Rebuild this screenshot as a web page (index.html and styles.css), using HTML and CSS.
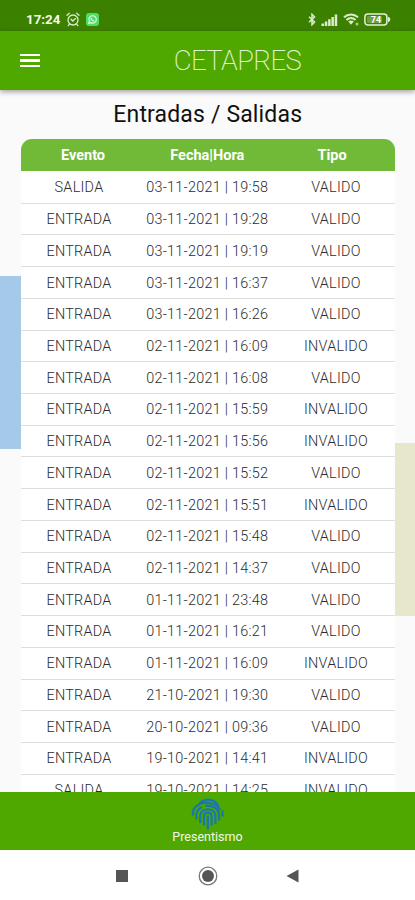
FILE: index.html
```html
<!DOCTYPE html>
<html lang="es">

<head>
    <meta charset="UTF-8">
    <meta name="viewport" content="width=device-width, initial-scale=1.0">
    <title>CETAPRES</title>
    <link rel="stylesheet" href="styles.css">
</head>

<body>
    <div class="statusBar">
        <div class="statusLeft">
            <span class="clock">17:24</span>
            <svg class="alarmIcon" width="14" height="15" viewBox="0 0 14 15" fill="none" stroke="#dcebcd" stroke-width="1.3" stroke-linecap="round">
                <circle cx="7" cy="8" r="5" />
                <path d="M1 3.2L3.3 1.2M13 3.2L10.7 1.2M3.4 12.2L2.2 13.6M10.6 12.2L11.8 13.6M5 7.2L6.8 9L9.4 6.6" />
            </svg>
            <svg width="13" height="13" viewBox="0 0 13 13">
                <rect width="13" height="13" rx="3" fill="#4ade66" />
                <path d="M2.7 10.4L3.4 8.2A3.7 3.7 0 1 1 4.9 9.7Z" fill="none" stroke="#e6ffe8" stroke-width="1.1" />
                <path d="M5.2 4.7C5 6.6 6.4 8 8.3 8" fill="none" stroke="#e6ffe8" stroke-width="1.2" />
            </svg>
        </div>
        <div class="statusRight">
            <svg width="8" height="13" viewBox="0 0 8 13" fill="none" stroke="#dcebcd" stroke-width="1.5">
                <path d="M1 3.7L6.6 9L4 11.7V1.3L6.6 4L1 9.3" />
            </svg>
            <svg class="signalIcon" width="17" height="12" viewBox="0 0 17 12" fill="#dcebcd">
                <path d="M0.5 9.5h2.5V12H0.5zM3.8 7.5h2.5V12H3.8zM7.1 5.3h2.5V12H7.1zM10.4 3h2.5v9h-2.5zM13.7 0.5h2.5V12h-2.5z" />
            </svg>
            <svg class="wifiIcon" width="17" height="13" viewBox="0 0 17 13" fill="none" stroke="#dcebcd" stroke-width="2">
                <path d="M1 4.3C5.2 0.5 10.8 0.5 15 4.3M3.4 7C6.3 4.5 9.7 4.5 12.6 7" />
                <path d="M5.2 8.6C7 7.2 9 7.2 10.8 8.6L8 11.8Z" fill="#dcebcd" stroke="none" />
                <circle cx="14" cy="11" r="1.5" fill="#a9cb85" stroke="none" />
            </svg>
            <svg class="batteryIcon" width="27" height="13" viewBox="0 0 27 13">
                <rect x="0.9" y="1" width="22" height="11" rx="3" fill="none" stroke="#e4f0d8" stroke-width="1.5" />
                <rect x="3" y="3" width="15" height="7" rx="1" fill="#6fa040" />
                <path d="M24 3.8C27 4.6 27 8.4 24 9.2Z" fill="#e4f0d8" />
                <text x="12" y="9.8" text-anchor="middle">74</text>
            </svg>
        </div>
    </div>

    <header class="appBar">
        <div class="menuButton">
            <span></span>
            <span></span>
            <span></span>
        </div>
        <h1>CETAPRES</h1>
    </header>

    <main class="content">
        <h2>Entradas / Salidas</h2>
        <table class="events">
            <thead>
                <tr><th>Evento</th><th>Fecha|Hora</th><th>Tipo</th></tr>
            </thead>
            <tbody>
                <tr><td>SALIDA</td><td>03-11-2021 | 19:58</td><td>VALIDO</td></tr>
                <tr><td>ENTRADA</td><td>03-11-2021 | 19:28</td><td>VALIDO</td></tr>
                <tr><td>ENTRADA</td><td>03-11-2021 | 19:19</td><td>VALIDO</td></tr>
                <tr><td>ENTRADA</td><td>03-11-2021 | 16:37</td><td>VALIDO</td></tr>
                <tr><td>ENTRADA</td><td>03-11-2021 | 16:26</td><td>VALIDO</td></tr>
                <tr><td>ENTRADA</td><td>02-11-2021 | 16:09</td><td>INVALIDO</td></tr>
                <tr><td>ENTRADA</td><td>02-11-2021 | 16:08</td><td>VALIDO</td></tr>
                <tr><td>ENTRADA</td><td>02-11-2021 | 15:59</td><td>INVALIDO</td></tr>
                <tr><td>ENTRADA</td><td>02-11-2021 | 15:56</td><td>INVALIDO</td></tr>
                <tr><td>ENTRADA</td><td>02-11-2021 | 15:52</td><td>VALIDO</td></tr>
                <tr><td>ENTRADA</td><td>02-11-2021 | 15:51</td><td>INVALIDO</td></tr>
                <tr><td>ENTRADA</td><td>02-11-2021 | 15:48</td><td>VALIDO</td></tr>
                <tr><td>ENTRADA</td><td>02-11-2021 | 14:37</td><td>VALIDO</td></tr>
                <tr><td>ENTRADA</td><td>01-11-2021 | 23:48</td><td>VALIDO</td></tr>
                <tr><td>ENTRADA</td><td>01-11-2021 | 16:21</td><td>VALIDO</td></tr>
                <tr><td>ENTRADA</td><td>01-11-2021 | 16:09</td><td>INVALIDO</td></tr>
                <tr><td>ENTRADA</td><td>21-10-2021 | 19:30</td><td>VALIDO</td></tr>
                <tr><td>ENTRADA</td><td>20-10-2021 | 09:36</td><td>VALIDO</td></tr>
                <tr><td>ENTRADA</td><td>19-10-2021 | 14:41</td><td>INVALIDO</td></tr>
                <tr><td>SALIDA</td><td>19-10-2021 | 14:25</td><td>INVALIDO</td></tr>
            </tbody>
        </table>
    </main>

    <footer class="tabBar">
        <svg width="34" height="32" viewBox="0 0 34 32" fill="none" stroke="#1777ae" stroke-width="2.2">
            <path d="M7.5 7.2C12.5 -0.2 22.5 -0.4 27.6 8.2" />
            <path d="M2 17.5C1.4 13.5 2.6 10.6 5.2 8.4C13 2 25.4 4.5 29.3 12.2" />
            <path d="M31.5 12.5V18.5" />
            <path d="M5.4 21.5V16.5C5.8 12.6 8.4 10.2 11 9M14 7.8C21.6 6.4 28 11 28 17.5V22.5" />
            <path d="M9.2 25V17.5C9.6 9.3 24 9.2 24.4 17.5V26" />
            <path d="M13 27.5V18C13.2 13.6 20.4 13.6 20.6 18V27.5" />
            <path d="M16.8 17.5V31.5" />
        </svg>
        <span>Presentismo</span>
    </footer>

    <nav class="systemNav">
        <svg width="14" height="14" viewBox="0 0 14 14">
            <rect x="1" y="1" width="12" height="12" fill="#555" />
        </svg>
        <svg width="20" height="20" viewBox="0 0 20 20">
            <circle cx="10" cy="10" r="8.8" fill="none" stroke="#777" stroke-width="1.3" />
            <circle cx="10" cy="10" r="6" fill="#555" />
        </svg>
        <svg width="14" height="14" viewBox="0 0 14 14">
            <path d="M0.5 7L12.5 0.5V13.5Z" fill="#555" />
        </svg>
    </nav>
</body>

</html>
```

FILE: styles.css
```css
body {
    margin: 0;
    height: 900px;
    display: flex;
    flex-direction: column;
    overflow: hidden;
    background-color: #fafafa;
    font-family: Roboto, sans-serif;
}

/* Android status bar */

.statusBar {
    height: 31px;
    flex: none;
    box-sizing: border-box;
    padding: 8px 24px 0 26px;
    display: flex;
    justify-content: space-between;
    background-color: #3c8000;
}

.statusLeft,
.statusRight {
    display: flex;
    align-items: center;
    height: 23px;
}

.clock {
    width: 34px;
    font-size: 13.3px;
    font-weight: 700;
    color: #f2f8ec;
}

.alarmIcon {
    margin: 0 6px;
}

.signalIcon {
    margin: 0 5px;
}

.wifiIcon {
    margin-right: 4px;
}

.batteryIcon text {
    font-size: 9px;
    font-weight: 700;
    fill: #fff;
}

.appBar {
    height: 59px;
    flex: none;
    display: flex;
    align-items: center;
    background-color: #4fa800;
    box-shadow: 0 2px 5px rgba(0, 0, 0, 0.35);
}

.menuButton {
    width: 20px;
    margin-left: 20px;
    display: flex;
    flex-direction: column;
    gap: 3px;
}

.menuButton span {
    height: 2.4px;
    background-color: #fff;
}

.appBar h1 {
    flex: 1;
    margin: 0 0 0 20px;
    text-align: center;
    font-size: 27.5px;
    font-weight: 200;
    letter-spacing: -0.6px;
    color: #e3f3d5;
}

.content {
    flex: 1;
    min-height: 0;
    overflow: hidden;
    padding: 0 20.5px 0 21px;
    background-image: linear-gradient(#a5cae9, #a5cae9), linear-gradient(#e6e7cb, #e6e7cb);
    background-repeat: no-repeat;
    background-size: 22px 173px, 21px 173px;
    background-position: 0 186px, right 353px;
}

.content h2 {
    margin: 0;
    height: 49px;
    line-height: 49px;
    text-align: center;
    font-size: 23px;
    font-weight: 400;
    letter-spacing: 0.15px;
    color: #111;
}

.events {
    width: 100%;
    table-layout: fixed;
    border-spacing: 0;
    text-align: center;
}

.events th,
.events td {
    box-sizing: border-box;
    padding: 0;
}

.events th {
    height: 32px;
    padding-top: 1px;
    font-size: 14.5px;
    font-weight: 700;
    color: #fff;
    background-color: #70ba38;
}

.events th:first-child {
    width: 116px;
    padding-left: 8px;
    border-top-left-radius: 11px;
}

.events th:last-child {
    width: 117px;
    padding-right: 8px;
    border-top-right-radius: 11px;
}

.events td {
    height: 31.72px;
    padding-top: 1px;
    font-size: 14.4px;
    font-weight: 300;
    letter-spacing: 0.27px;
    color: #2c2c2c;
    background-color: #fff;
    border-bottom: 1px solid #dedede;
}

.events tbody tr:first-child td {
    height: 32.72px;
    padding-top: 2px;
}

.tabBar {
    height: 58px;
    flex: none;
    box-sizing: border-box;
    padding-top: 6px;
    display: flex;
    flex-direction: column;
    align-items: center;
    background-color: #4fa800;
    color: #f2f8ec;
    font-size: 12.5px;
    line-height: 14px;
}

.systemNav {
    height: 50px;
    flex: none;
    box-sizing: border-box;
    padding-top: 1px;
    display: flex;
    justify-content: center;
    align-items: center;
    gap: 68.5px;
    background-color: #fff;
}
```
